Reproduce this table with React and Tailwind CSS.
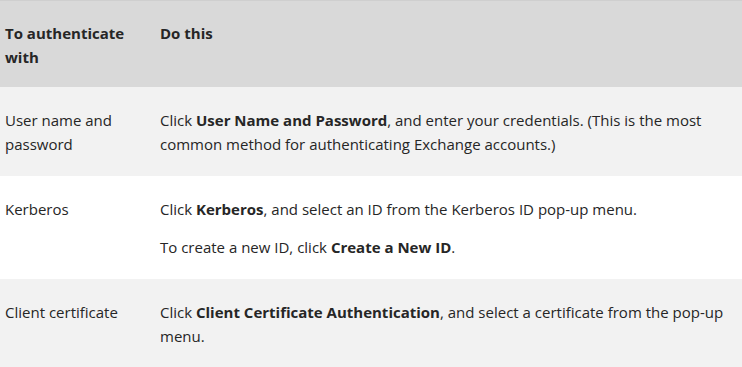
const rows = [
  {
    method: "User name and password",
    steps: [
      <>
        Click <b className="font-bold">User Name and Password</b>, and enter your
        credentials. (This is the most common method for authenticating Exchange
        accounts.)
      </>,
    ],
  },
  {
    method: "Kerberos",
    steps: [
      <>
        Click <b className="font-bold">Kerberos</b>, and select an ID from the
        Kerberos ID pop-up menu.
      </>,
      <>
        To create a new ID, click <b className="font-bold">Create a New ID</b>.
      </>,
    ],
  },
  {
    method: "Client certificate",
    steps: [
      <>
        Click <b className="font-bold">Client Certificate Authentication</b>, and
        select a certificate from the pop-up menu.
      </>,
    ],
  },
];

export default function App() {
  return (
    <div className="w-[742px] h-[367px] overflow-hidden bg-white font-['Open_Sans',sans-serif] text-[15px] leading-6 text-[#262626]">
      <table className="w-full border-collapse border-t border-[#cfcfcf] table-fixed">
        <thead>
          <tr className="bg-[#d9d9d9] align-top text-left">
            <th className="w-[160px] pl-[5px] pr-[10px] pt-[20px] pb-[18px] font-bold">
              To authenticate with
            </th>
            <th className="pr-[7px] pt-[20px] pb-[18px] font-bold">Do this</th>
          </tr>
        </thead>
        <tbody>
          {rows.map((r, i) => (
            <tr
              key={r.method}
              className={`align-top ${i % 2 === 0 ? "bg-[#f2f2f2]" : "bg-white"}`}
            >
              <td className="pl-[5px] pr-[10px] pt-[21px] pb-[20px]">{r.method}</td>
              <td className="pr-[7px] pt-[21px] pb-[20px]">
                <div className="flex flex-col gap-[14px]">
                  {r.steps.map((s, j) => (
                    <p key={j}>{s}</p>
                  ))}
                </div>
              </td>
            </tr>
          ))}
        </tbody>
      </table>
    </div>
  );
}
